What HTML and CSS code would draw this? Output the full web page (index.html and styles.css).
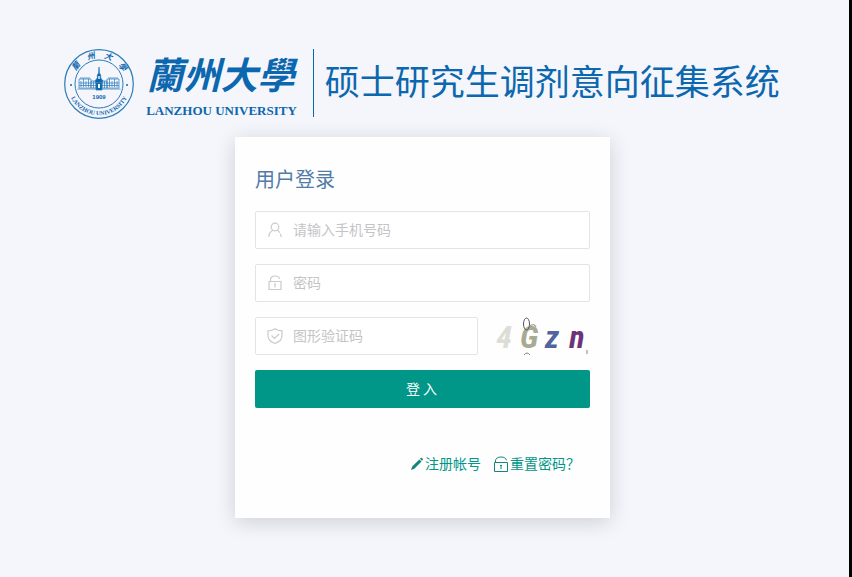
FILE: index.html
```html
<!DOCTYPE html>
<html lang="zh-CN">
<head>
<meta charset="utf-8">
<title>硕士研究生调剂意向征集系统</title>
<meta name="viewport" content="width=device-width, initial-scale=1">
<link rel="stylesheet" href="styles.css">
</head>
<body>
<header class="header">
  <svg class="seal" viewBox="0 0 72 72" role="img" aria-label="兰州大学校徽">
    <defs>
      <path id="arc-bottom" d="M4.800 36A31.200 31.200 0 0 0 67.200 36"/>
    </defs>
    <circle cx="36" cy="36" r="34.300" class="ring"/>
    <circle cx="36" cy="36" r="24" class="ring thin"/>
    <circle cx="8" cy="37" r="1" class="solid"/>
    <circle cx="64" cy="37" r="1" class="solid"/>
    <text class="seal-cn" transform="translate(15 20) rotate(-50)">蘭</text>
    <text class="seal-cn" transform="translate(28.500 11) rotate(-16)">州</text>
    <text class="seal-cn" transform="translate(44.500 11.300) rotate(18)">大</text>
    <text class="seal-cn" transform="translate(57.500 20.500) rotate(50)">學</text>
    <text class="seal-en"><textPath href="#arc-bottom" startOffset="50%">LANZHOU UNIVERSITY</textPath></text>
    <g class="building">
      <path d="M16 31h12v9H16zM44 31h12v9H44zM28 33h5v7h-5zM39 33h5v7h-5z"/>
      <path d="M18 33v6M20.500 31v8M23 33v6M25.500 31v8M46.500 31v8M49 33v6M51.500 31v8M54 33v6M16 35h40M16 37.500h40M30.500 33v7M41.500 33v7"/>
      <path d="M14.500 41h43M17 30h10M45 30h10"/>
      <path class="solid" d="M36 19l.4 6 1.300 2v3l2 2.500v2h-7.400v-2l2-2.500v-3l1.300-2zM33 35h6v7h-6z"/>
      <path class="door" d="M35 36h2v4h-2zM35.300 28h1.400v3h-1.400z"/>
    </g>
    <text x="36" y="51" class="seal-year">1909</text>
  </svg>
  <div class="wordmark">
    <span class="name-cn">蘭州大學</span>
    <span class="name-en">LANZHOU UNIVERSITY</span>
  </div>
  <h1 class="title">硕士研究生调剂意向征集系统</h1>
</header>

<main class="card">
  <h2 class="heading">用户登录</h2>
  <form class="form">
    <label class="field">
      <svg class="icon" viewBox="0 0 16 16" aria-hidden="true"><circle cx="8" cy="5" r="3.800"/><path d="M5.800 8.200C3.600 9.300 2.100 11.300 1.800 15M10.200 8.200c1.200.7 2 1.500 2.600 2.500M13.300 11.800c.4 1 .7 2 .8 3.200"/></svg>
      <input class="input" type="text" placeholder="请输入手机号码" aria-label="手机号码">
    </label>
    <label class="field">
      <svg class="icon" viewBox="0 0 16 16" aria-hidden="true"><path d="M2 6.500h12v8H2zM3.500 6.500V5C3.500 2.500 5 1 8 1c2.600 0 4.200 1 4.500 3M8 9v3.500M7 9h2"/></svg>
      <input class="input" type="password" placeholder="密码" aria-label="密码">
    </label>
    <div class="captcha-row">
      <label class="field">
        <svg class="icon" viewBox="0 0 16 16" aria-hidden="true"><path d="M8 .8C6 2.300 3.800 2.800 1 2.800V8c0 3.800 3 6 7 7.500 4-1.500 7-3.700 7-7.500V2.800C12.200 2.800 10 2.300 8 .8zM4.500 7.500l3 3 4.500-4.500"/></svg>
        <input class="input" type="text" placeholder="图形验证码" aria-label="图形验证码">
      </label>
      <svg class="captcha" viewBox="0 0 100 38" role="img" aria-label="图形验证码图片">
        <text x="14" y="31" fill="#dcddd6">4</text>
        <text x="39" y="31" fill="#aaaa91">G</text>
        <text x="62" y="31" fill="#5164a0">z</text>
        <text x="87" y="31" fill="#6c3579">n</text>
        <ellipse cx="36.500" cy="7" rx="3" ry="6" fill="none" stroke="#55555c"/>
        <path d="M39 9q6-3 7 1M34 38q3-4 6 0M97 33v4" fill="none" stroke="#85858a"/>
      </svg>
    </div>
    <button class="submit" type="submit">登 入</button>
  </form>
  <nav class="links">
    <a class="link" href="#register"><svg class="pencil" viewBox="0 0 14 14" aria-hidden="true"><path d="M1 13l1.200-3.500L9.300 2.400l2.200 2.200-7.200 7.200zM10 1.700l.8-.8q.8-.5 1.600.3.800.9.300 1.700l-.8.900z"/></svg><span class="link-text">注册帐号</span></a>
    <a class="link" href="#reset"><svg class="lock" viewBox="0 0 16 16" aria-hidden="true"><path d="M1.500 6.500h13v9h-13zM2.500 6.500V5C2.500 2.500 4.500 1 8 1c3.200 0 5 1.200 5.500 3.300M8 9.500V13M7 9.500h2"/></svg><span class="link-text">重置密码？</span></a>
  </nav>
</main>
</body>
</html>
```
FILE: styles.css
```css
* {
  box-sizing: border-box;
}

body {
  margin: 0;
  min-height: 100vh;
  padding: 48px 4px 24px 0;
  border-right: 3px solid #000;
  background: #f5f5fc;
  color: #009688;
  font: 14px/20px "Noto Sans CJK SC", sans-serif;
}

.header {
  display: flex;
  justify-content: center;
  align-items: flex-start;
  height: 72px;
  color: #0b67ae;
}

.seal {
  flex: none;
  width: 72px;
  height: 72px;
  fill: #0b67ae;
}

.ring {
  fill: none;
  stroke: #2a7bb9;
  stroke-width: 1.2;
}

.thin {
  stroke-width: 1;
}

.seal text {
  text-anchor: middle;
}

.seal-cn {
  font: italic bold 8px "Noto Sans CJK TC", sans-serif;
}

.seal-en {
  font: bold 6px "Liberation Serif", serif;
}

.seal-year {
  font: bold 6px "Liberation Sans", sans-serif;
}

.building {
  fill: none;
  stroke: #2a7bb9;
  stroke-width: 0.7;
}

.solid {
  fill: #0b67ae;
}

.door {
  fill: #f5f5fc;
  stroke: none;
}

.wordmark {
  display: flex;
  flex-direction: column;
  flex: none;
  align-items: center;
  margin: 0 16px 0 11px;
}

.name-cn {
  padding: 0 2px 5px 0;
  font: italic bold 37px/50px "Noto Sans CJK TC", sans-serif;
}

.name-en {
  font: bold 13px/16px "Liberation Serif", serif;
}

.title {
  margin: 1px 0 0;
  padding: 0 2px 6px 11px;
  border-left: 1px solid #0b67ae;
  font-size: 35px;
  font-weight: 400;
  line-height: 62px;
  white-space: nowrap;
}

.card {
  width: 375px;
  max-width: 100%;
  min-height: 381px;
  margin: 17px auto 0;
  padding: 27px 20px 40px;
  background: #fefefe;
  box-shadow: 0 4px 20px rgba(0, 0, 0, 0.16);
}

.heading {
  margin: 0 0 17px;
  color: #527ca8;
  font-size: 20px;
  font-weight: 400;
  line-height: 30px;
}

.form {
  display: flex;
  flex-direction: column;
  gap: 15px;
}

.field {
  display: flex;
  flex: 1;
  align-items: center;
  min-width: 0;
  height: 38px;
  padding-left: 11px;
  border: 1px solid #e4e4e7;
  border-radius: 2px;
  background: #fff;
}

.form > .field {
  flex: none;
}

.icon {
  flex: none;
  width: 16px;
  height: 16px;
  fill: none;
  stroke: #cbcbcb;
  stroke-width: 1.2;
}

.input {
  flex: 1;
  min-width: 0;
  height: 36px;
  padding: 0 10px 2px;
  border: 0;
  outline: 0;
  background: none;
  color: #555;
  font: inherit;
}

.input::placeholder {
  color: #c4c4c6;
  opacity: 1;
}

.captcha-row {
  display: flex;
  gap: 12px;
}

.captcha {
  flex: none;
  width: 100px;
  height: 38px;
  overflow: visible;
  font: italic bold 32px "Roboto Condensed", "Open Sans Condensed", Roboto, sans-serif;
  text-anchor: middle;
}

.submit {
  height: 38px;
  padding: 0 2px 2px 0;
  border: 0;
  border-radius: 2px;
  background: #009688;
  color: #fff;
  font: inherit;
  cursor: pointer;
}

.links {
  display: flex;
  justify-content: flex-end;
  gap: 12px;
  margin-top: 45px;
  padding-right: 10px;
}

.link {
  display: flex;
  align-items: center;
  gap: 1px;
  color: #009688;
  text-decoration: none;
}

.link-text {
  padding-bottom: 2px;
}

.pencil {
  width: 14px;
  height: 14px;
  fill: #168579;
}

.lock {
  width: 16px;
  height: 16px;
  fill: none;
  stroke: #168579;
}
```
